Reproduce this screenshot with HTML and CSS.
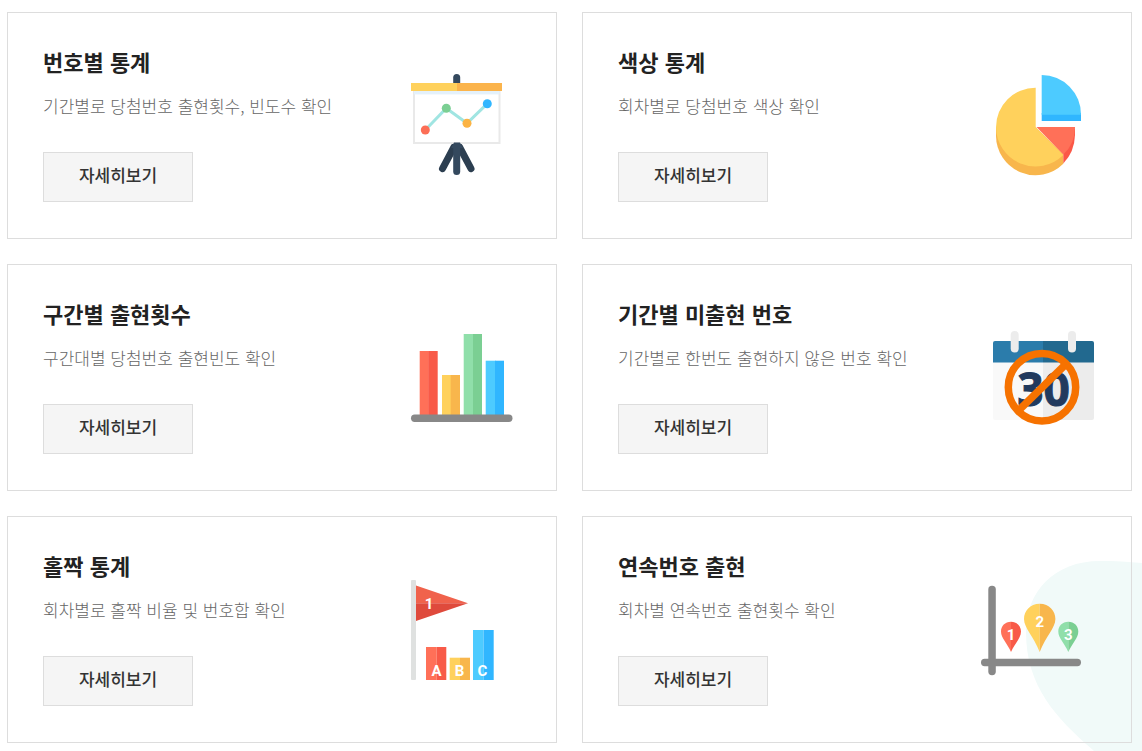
FILE: index.html
```
<!DOCTYPE html>
<html lang="ko">

<head>
    <meta charset="UTF-8">
    <meta name="viewport" content="width=device-width, initial-scale=1.0">
    <title>당첨번호 통계</title>
    <link rel="stylesheet" href="styles.css">
</head>

<body>
    <div class="wrap">
        <!-- 배경 장식 -->
        <svg class="deco" viewBox="0 0 160 240" aria-hidden="true">
            <path d="M72 1C26 1 -2 32 -2 72C-2 126 28 158 65 190L112 240H160V14C135 4 105 1 72 1Z" fill="#f1faf9" />
        </svg>
        <ul class="stat_list">
            <li class="stat">
                <div class="txt">
                    <h3>번호별 통계</h3>
                    <p>기간별로 당첨번호 출현횟수, 빈도수 확인</p>
                    <a href="#" class="btn_more">자세히보기</a>
                </div>
                <svg class="ico" viewBox="0 0 126 119" aria-hidden="true">
                    <path d="M52.7 11.5V20" stroke="#34495e" stroke-width="7" stroke-linecap="round" />
                    <path d="M50 81L38.5 102.7M55.5 81L67 102.7" stroke="#2c3e50" stroke-width="7" stroke-linecap="round" />
                    <path d="M52.7 82V105.5" stroke="#34495e" stroke-width="7" stroke-linecap="round" />
                    <rect x="10" y="25" width="85.5" height="52" fill="#fff" stroke="#e9e9e9" stroke-width="2" />
                    <path d="M50 76.5h6l3 5.5H47z" fill="#34495e" />
                    <rect x="10" y="25" width="85.5" height="3.4" fill="#e4f1fb" />
                    <rect x="7" y="17" width="46" height="8" fill="#ffd15c" />
                    <rect x="53" y="17" width="45" height="8" fill="#fbb44c" />
                    <polyline points="21.3,64 42.3,42.3 63,57.3 83.3,37.7" fill="none" stroke="#a0e5e2" stroke-width="3" />
                    <circle cx="21.3" cy="64" r="4.5" fill="#fc6e56" />
                    <circle cx="42.3" cy="42.3" r="4.5" fill="#7bcf93" />
                    <circle cx="63" cy="57.3" r="4.5" fill="#fbb344" />
                    <circle cx="83.3" cy="37.7" r="4.5" fill="#30b6ff" />
                </svg>
            </li>
            <li class="stat">
                <div class="txt">
                    <h3>색상 통계</h3>
                    <p>회차별로 당첨번호 색상 확인</p>
                    <a href="#" class="btn_more">자세히보기</a>
                </div>
                <svg class="ico" viewBox="0 0 126 119" aria-hidden="true">
                    <path d="M17 61V70A39.5 39.5 0 0 0 84.3 97.7V88L56.7 61.3Z" fill="#f8b64c" />
                    <path d="M56.7 21.7A39.5 39.5 0 0 0 17 61.3A39.5 39.5 0 0 0 84.3 89L56.7 61.3Z" fill="#ffd15c" />
                    <path d="M96 61V69Q95.5 86 84.3 97.5V88Z" fill="#fb5747" />
                    <path d="M57.5 61H96Q96 78 84.3 88.5Z" fill="#ff7058" />
                    <path d="M62.7 47H102V55H62.7Z" fill="#30b6ff" />
                    <path d="M62.7 9A39.3 39.3 0 0 1 102 48.7H62.7Z" fill="#4dcbff" />
                </svg>
            </li>
            <li class="stat">
                <div class="txt">
                    <h3>구간별 출현횟수</h3>
                    <p>구간대별 당첨번호 출현빈도 확인</p>
                    <a href="#" class="btn_more">자세히보기</a>
                </div>
                <svg class="ico" viewBox="0 0 126 119" aria-hidden="true">
                    <path d="M15.7 33h9v64h-9z" fill="#ff7058" />
                    <path d="M24.3 33h9.4v64h-9.4z" fill="#f85a48" />
                    <path d="M38 57h9v40h-9z" fill="#ffd15c" />
                    <path d="M46.7 57h9.3v40h-9.3z" fill="#f8b64c" />
                    <path d="M59.7 16h10v81h-10z" fill="#90dfaa" />
                    <path d="M69 16h9v81h-9z" fill="#7bcf93" />
                    <path d="M81.7 42.7h10V97h-10z" fill="#4dcbff" />
                    <path d="M91 42.7h9V97h-9z" fill="#30b6ff" />
                    <rect x="7" y="96.5" width="101.5" height="7.5" rx="3.7" fill="#888" />
                </svg>
            </li>
            <li class="stat">
                <div class="txt">
                    <h3>기간별 미출현 번호</h3>
                    <p>기간별로 한번도 출현하지 않은 번호 확인</p>
                    <a href="#" class="btn_more">자세히보기</a>
                </div>
                <svg class="ico" viewBox="0 0 126 119" aria-hidden="true">
                    <path d="M14 44h50v58H16q-2 0-2-2z" fill="#f9f9f9" />
                    <path d="M64 44h51v56q0 2-2 2H64z" fill="#ececec" />
                    <path d="M64 23H16q-2 0-2 2v19.5h50z" fill="#2b7cab" />
                    <path d="M64 23h49q2 0 2 2v19.5H64z" fill="#22698f" />
                    <rect x="31.7" y="13" width="8" height="21.5" rx="4" fill="#ececec" />
                    <rect x="89" y="13" width="8" height="21.5" rx="4" fill="#ececec" />
                    <text class="num30" x="64.5" y="88" text-anchor="middle">30</text>
                    <circle cx="63" cy="69.3" r="33.7" fill="none" stroke="#f67200" stroke-width="7.5" />
                    <path d="M39 93L87 46" stroke="#f67200" stroke-width="7.5" />
                </svg>
            </li>
            <li class="stat">
                <div class="txt">
                    <h3>홀짝 통계</h3>
                    <p>회차별로 홀짝 비율 및 번호합 확인</p>
                    <a href="#" class="btn_more">자세히보기</a>
                </div>
                <svg class="ico" viewBox="0 0 126 119" aria-hidden="true">
                    <rect x="7" y="10" width="5" height="100" rx="1" fill="#dfe1e0" />
                    <path d="M12 15.5L64 33.3H12Z" fill="#f0624c" />
                    <path d="M12 33.3H64L12 51Z" fill="#df4a3c" />
                    <path d="M22 77h10.7v33H22z" fill="#ff7058" />
                    <path d="M32.7 77h9.6v33h-9.6z" fill="#f85a48" />
                    <path d="M45.7 87.7H56V110H45.7z" fill="#ffd15c" />
                    <path d="M56 87.7h10V110H56z" fill="#f8b64c" />
                    <path d="M69 60h10.5v50H69z" fill="#4dcbff" />
                    <path d="M79.5 60h10.2v50H79.5z" fill="#30b6ff" />
                    <text class="label" x="25" y="39" text-anchor="middle">1</text>
                    <text class="label" x="32.5" y="105.5" text-anchor="middle">A</text>
                    <text class="label" x="55.5" y="105.5" text-anchor="middle">B</text>
                    <text class="label" x="78.5" y="105.5" text-anchor="middle">C</text>
                </svg>
            </li>
            <li class="stat">
                <div class="txt">
                    <h3>연속번호 출현</h3>
                    <p>회차별 연속번호 출현횟수 확인</p>
                    <a href="#" class="btn_more">자세히보기</a>
                </div>
                <svg class="ico" viewBox="0 0 126 119" aria-hidden="true">
                    <rect x="9.3" y="15.7" width="7.5" height="89.5" rx="3.7" fill="#888" />
                    <rect x="2" y="88.7" width="100" height="7.5" rx="3.7" fill="#888" />
                    <path d="M32 51.7C26 51.7 22 56 22 61.5C22 68 28 73 32 82Z" fill="#ff7058" />
                    <path d="M32 51.7C38 51.7 42 56 42 61.5C42 68 36 73 32 82Z" fill="#f85a48" />
                    <path d="M60.7 33.7C51 33.7 45 41 45 49C45 58 55 67 60.7 82Z" fill="#ffd15c" />
                    <path d="M60.7 33.7C70.4 33.7 76.4 41 76.4 49C76.4 58 66.4 67 60.7 82Z" fill="#f8b64c" />
                    <path d="M89.3 51.7C83.3 51.7 79.3 56 79.3 61.5C79.3 68 85.3 73 89.3 82Z" fill="#90dfaa" />
                    <path d="M89.3 51.7C95.3 51.7 99.3 56 99.3 61.5C99.3 68 93.3 73 89.3 82Z" fill="#7bcf93" />
                    <text class="label" x="32" y="70" text-anchor="middle">1</text>
                    <text class="label" x="60.7" y="57" text-anchor="middle">2</text>
                    <text class="label" x="89.3" y="70" text-anchor="middle">3</text>
                </svg>
            </li>
        </ul>
    </div>
</body>

</html>
```
FILE: styles.css
```
body,
ul,
li,
h3,
p {
    margin: 0;
    padding: 0;
    list-style: none;
}

body {
    font-family: "Noto Sans CJK KR", sans-serif;
    background: #fff;
}

.wrap {
    position: relative;
    overflow: hidden;
    padding: 12px 10px 8px 7px;
}

/* 오른쪽 아래 배경 장식 */
.deco {
    position: absolute;
    right: -46px;
    bottom: -49px;
    width: 160px;
    height: 240px;
    overflow: visible;
}

.stat_list {
    position: relative;
    display: grid;
    grid-template-columns: 1fr 1fr;
    gap: 25px;
}

.stat {
    display: flex;
    align-items: center;
    justify-content: space-between;
    padding: 35px 26px 36px 35px;
    border: 1px solid #ddd;
}

.stat h3 {
    font-size: 22px;
    line-height: 26px;
    font-weight: 700;
    color: #222;
}

.stat p {
    margin-top: 19px;
    font-size: 17px;
    line-height: 26px;
    font-weight: 300;
    color: #666;
}

.btn_more {
    display: block;
    box-sizing: border-box;
    width: 150px;
    height: 50px;
    margin-top: 33px;
    border: 1px solid #ddd;
    background: #f5f5f5;
    font-size: 17px;
    line-height: 44px;
    font-weight: 500;
    color: #333;
    text-align: center;
    text-decoration: none;
}

.btn_more:hover {
    background: #eee;
}

.ico {
    flex: none;
    width: 126px;
    height: 119px;
    fill: none;
}

.num30 {
    font: bold 46px "Open Sans", sans-serif;
    fill: #223a5e;
    stroke: #223a5e;
    stroke-width: 1px;
}

.label {
    font: bold 15px Roboto, sans-serif;
    fill: #fff;
}
```
